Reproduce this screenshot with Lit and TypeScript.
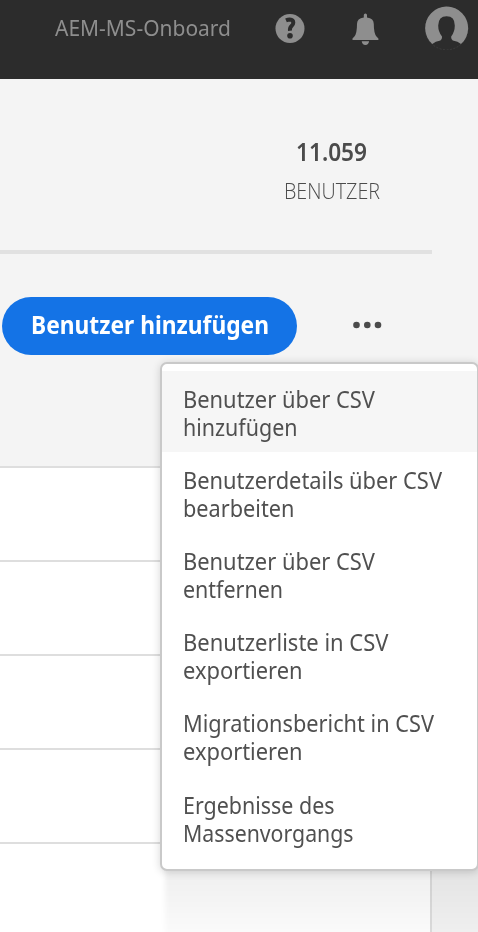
import { LitElement, html, css } from "lit";
import { customElement, property } from "lit/decorators.js";

/** A single line of text, condensed or widened to occupy exactly `width` pixels. */
@customElement("fit-text")
class FitText extends LitElement {
  @property({ type: Number }) width = 0;
  @property() text = "";

  static styles = css`
    :host { display: block; }
    .line { display: inline-block; white-space: pre; transform-origin: 0 50%; vertical-align: top; }
  `;

  updated() {
    const line = this.renderRoot.querySelector(".line") as HTMLElement;
    this.style.width = `${this.width}px`;
    line.style.transform = "none";
    const natural = line.getBoundingClientRect().width;
    if (natural > 0) line.style.transform = `scaleX(${this.width / natural})`;
  }

  render() {
    return html`<span class="line">${this.text}</span>`;
  }
}

type Line = [string, number];

const MENU: Line[][] = [
  [["Benutzer über CSV", 192], ["hinzufügen", 114.5]],
  [["Benutzerdetails über CSV", 259], ["bearbeiten", 111.5]],
  [["Benutzer über CSV", 192], ["entfernen", 100]],
  [["Benutzerliste in CSV", 205.5], ["exportieren", 119.5]],
  [["Migrationsbericht in CSV", 251], ["exportieren", 119.5]],
  [["Ergebnisse des", 151.5], ["Massenvorgangs", 170.5]],
];

@customElement("app-root")
class AppRoot extends LitElement {
  static styles = css`
    :host {
      display: block; position: relative; width: 478px; height: 932px; overflow: hidden;
      background: #f4f4f4; color: #4b4b4b; font-family: "Noto Sans", "Open Sans", sans-serif;
    }
    .top {
      display: flex; box-sizing: border-box; height: 79px; background: #2c2c2c; color: #8e8e8e;
      padding-left: 55px;
    }
    .org { font-size: 21.6px; line-height: 30px; padding-top: 13px; }
    .icon { display: block; fill: #8e8e8e; flex: none; }
    .help { margin: 13px 0 0 44px; }
    .bell { margin: 13px 0 0 47px; }
    .user { margin: 6px 0 0 46px; }
    .stats {
      box-sizing: border-box; height: 175px; width: 432px; border-bottom: 4px solid #e1e1e1;
      display: flex; flex-direction: column; align-items: flex-end; padding-top: 54px;
    }
    .count { font-size: 26px; font-weight: 600; line-height: 36px; margin-right: 65.5px; }
    .label { font-family: "Open Sans", "Noto Sans", sans-serif; font-size: 21.4px; font-weight: 300; line-height: 30px; margin: 7px 52px 0 0; }
    .actions { display: flex; align-items: center; height: 58px; margin: 43px 0 0 2px; }
    .add {
      box-sizing: border-box; width: 295px; height: 58px; border: 0; border-radius: 29px; padding: 0 0 2px 28.5px;
      background: #1473e6; color: #fff; font: 700 24.5px/54px "Noto Sans", sans-serif; text-align: left;
    }
    .more { display: block; margin: 0 0 0 55px; fill: #4b4b4b; }
    .table { margin-top: 111px; width: 430px; background: #fff; border-right: 2px solid #dedede; height: 466px; }
    .row { box-sizing: border-box; height: 94px; border-top: 2px solid #dedede; }
    .shade {
      position: absolute; left: 165px; top: 866px; width: 330px; height: 130px;
      background: linear-gradient(rgba(0,0,0,.068), rgba(0,0,0,.02) 66px, transparent);
      filter: blur(2.5px);
    }
    .menu {
      position: absolute; left: 160px; top: 362px; width: 319px; height: 508.5px; box-sizing: border-box;
      border: 2px solid #c9c9c9; border-radius: 7px; background: #fff; padding: 7px 0;
      box-shadow: 0 1px 9px rgba(0,0,0,.16);
    }
    .item {
      box-sizing: border-box; height: 81.15px; padding: 13.8px 0 0 20.7px;
      font-size: 23.2px; line-height: 28px; color: #505050;
    }
    .item.active { background: #f6f6f6; }
  `;

  render() {
    return html`
      <header class="top">
        <fit-text class="org" .width=${176} .text=${"AEM-MS-Onboard"}></fit-text>
        <svg class="icon help" width="30" height="31" viewBox="0 0 30 31">
          <circle cx="15" cy="15.4" r="14.5" />
          <path d="M11 7.4Q13 6.5 14.8 6.5Q18.3 6.6 18.3 9.7Q18.3 11.5 16.4 13.1Q14.6 14.8 15 17.8" fill="none" stroke="#2c2c2c" stroke-width="4" />
          <circle cx="15" cy="22.7" r="2.8" fill="#2c2c2c" />
        </svg>
        <svg class="icon bell" width="27" height="33" viewBox="0 0 27 33">
          <path d="M11.8 4.5V2Q11.8.5 13.4.5T15 2v2.5Q21.8 5.3 21.8 11Q21.8 20.5 24.5 23.5L26.4 25.4V27H.5V25.4L2.4 23.5Q5 20.5 5 11Q5 5.3 11.8 4.5Z" />
          <path d="M9.7 28.3h7.4q-.5 3.7-3.7 3.7t-3.7-3.7Z" />
        </svg>
        <svg class="icon user" width="44" height="44" viewBox="0 0 44 44">
          <circle cx="21.6" cy="22.4" r="21.4" fill="none" stroke="#454545" stroke-width=".7" stroke-dasharray="2 1.5" />
          <path d="M7.3 38.1A21.5 21.5 0 1 1 36 38.1Q33 35.3 27.8 34.4Q25.9 33.8 26.2 30.5Q29.8 25.8 29.8 19.5Q29.8 10.3 21.6 10.3T13.2 19.5Q13.2 25.8 17 30.5Q17.3 33.8 15.4 34.4Q10.3 35.3 7.3 38.1Z" />
        </svg>
      </header>
      <section class="stats">
        <fit-text class="count" .width=${71} .text=${"11.059"}></fit-text>
        <fit-text class="label" .width=${96} .text=${"BENUTZER"}></fit-text>
      </section>
      <div class="actions">
        <button class="add"><fit-text .width=${238} .text=${"Benutzer hinzufügen"}></fit-text></button>
        <svg class="more" width="32" height="10" viewBox="0 0 32 10">
          <circle cx="4.5" cy="4" r="3.3" /><circle cx="15.3" cy="4" r="3.3" /><circle cx="26" cy="4" r="3.3" />
        </svg>
      </div>
      <div class="table">
        ${[0, 1, 2, 3, 4].map(() => html`<div class="row"></div>`)}
      </div>
      <div class="shade"></div>
      <div class="menu" role="menu">
        ${MENU.map((lines, i) => html`
          <div class="item ${i === 0 ? "active" : ""}" role="menuitem">
            ${lines.map(([text, width]) => html`<fit-text .width=${width} .text=${text}></fit-text>`)}
          </div>`)}
      </div>
    `;
  }
}
